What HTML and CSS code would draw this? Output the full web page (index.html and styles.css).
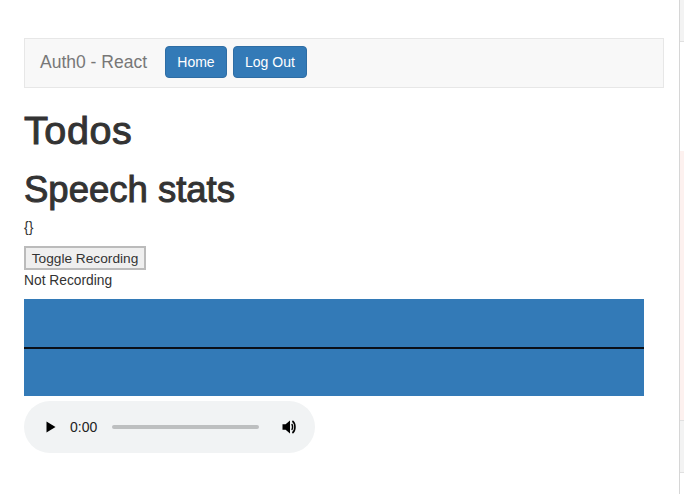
FILE: index.html
```html
<!DOCTYPE html>
<html lang="en">
<head>
    <meta charset="UTF-8">
    <title>Auth0 - React</title>
    <link rel="stylesheet" href="styles.css">
</head>
<body>
    <div class="page">
        <div class="container">
            <nav class="navbar">
                <a href="#" class="navbar-brand">Auth0 - React</a>
                <button class="btn btn-primary">Home</button>
                <button class="btn btn-primary">Log Out</button>
            </nav>

            <h1 class="title">Todos</h1>
            <h2 class="subtitle">Speech stats</h2>
            <p class="stats">{}</p>

            <button class="toggle">Toggle Recording</button>
            <div class="status">Not Recording</div>

            <div class="wave">
                <div class="wave-line"></div>
            </div>

            <div class="player">
                <svg class="play-icon" viewBox="0 0 12 14" width="12" height="14">
                    <path d="M1.5 1.5 L10.5 7 L1.5 12.5 Z" fill="#000"></path>
                </svg>
                <span class="time">0:00</span>
                <div class="track"></div>
                <svg class="volume-icon" viewBox="0 0 16 16" width="16" height="16">
                    <path d="M0.5 5.2 H3.6 L8 1.6 V14.4 L3.6 10.8 H0.5 Z" fill="#000"></path>
                    <path d="M9.6 5.2 C10.9 6.2 10.9 9.8 9.6 10.8" fill="none" stroke="#000" stroke-width="1.5"></path>
                    <path d="M10.4 2 C13.8 4.4 13.8 11.6 10.4 14" fill="none" stroke="#000" stroke-width="1.6"></path>
                </svg>
            </div>
        </div>

        <!-- strip of the next window showing at the right edge -->
        <div class="side-strip">
            <div class="strip-gray strip-top"></div>
            <div class="strip-blank"></div>
            <div class="strip-pink"></div>
            <div class="strip-gray strip-bottom"></div>
        </div>
    </div>
</body>
</html>
```

FILE: styles.css
```css
* {
    box-sizing: border-box;
}

html, body {
    margin: 0;
    height: 100%;
    overflow: hidden;
}

body {
    background: #fff;
    font-family: "Liberation Sans", Arial, sans-serif;
    font-size: 14px;
    line-height: 20px;
    color: #333;
}

.page {
    display: flex;
    width: 684px;
    height: 494px;
}

.container {
    flex: 1;
    padding: 38px 15px 0 24px;
}

.navbar {
    display: flex;
    align-items: center;
    height: 50px;
    padding: 0 0 2px 15px;
    background: #f8f8f8;
    border: 1px solid #e7e7e7;
    gap: 6px;
}

.navbar-brand {
    margin-right: 12px;
    font-size: 17.5px;
    color: #777;
    text-decoration: none;
}

.btn {
    height: 32px;
    padding: 0 11px;
    font-family: inherit;
    font-size: 14px;
    border-radius: 4px;
}

.btn-primary {
    min-width: 62px;
    color: #fff;
    background: #337ab7;
    border: 1px solid #2e6da4;
}

/* medium weight headings: regular face with a thin stroke */
.title {
    margin: 20px 0 0;
    font-size: 39.5px;
    line-height: 44px;
    font-weight: 400;
    letter-spacing: 0.6px;
    -webkit-text-stroke: 1px #333;
}

.subtitle {
    margin: 16px 0 0;
    font-size: 36.5px;
    line-height: 44px;
    font-weight: 400;
    -webkit-text-stroke: 1px #333;
}

.stats {
    margin: 5px 0 0;
}

.toggle {
    display: block;
    width: 122px;
    height: 24px;
    margin-top: 9px;
    padding: 0;
    font-family: inherit;
    font-size: 13.7px;
    color: #333;
    background: #efefef;
    border: 2px solid #bbb;
}

.status {
    margin-top: 1px;
    font-size: 13.8px;
}

.wave {
    display: flex;
    align-items: center;
    width: 620px;
    height: 97px;
    margin-top: 8px;
    background: #337ab7;
}

.wave-line {
    width: 100%;
    height: 2px;
    background: #0a0f18;
}

.player {
    display: flex;
    align-items: center;
    width: 291px;
    height: 52px;
    margin-top: 5px;
    padding: 0 17px 0 21px;
    background: #f1f3f4;
    border-radius: 26px;
}

.play-icon {
    flex: none;
}

.time {
    margin-left: 13px;
    color: #222;
}

.track {
    flex: 1;
    height: 4px;
    margin: 0 23px 0 15px;
    background: #bdbfc0;
    border-radius: 2px;
}

.volume-icon {
    flex: none;
}

.side-strip {
    display: flex;
    flex-direction: column;
    width: 5px;
    border-left: 1px solid #d6d6d6;
}

.strip-gray {
    background: #f3f3f3;
}

.strip-top {
    height: 42px;
    border-bottom: 1px solid #e0e0e0;
}

.strip-blank {
    height: 109px;
}

.strip-pink {
    height: 269px;
    background: #fdf1ef;
}

.strip-bottom {
    height: 53px;
    border-top: 1px solid #e0e0e0;
    border-bottom: 1px solid #e0e0e0;
}
```
